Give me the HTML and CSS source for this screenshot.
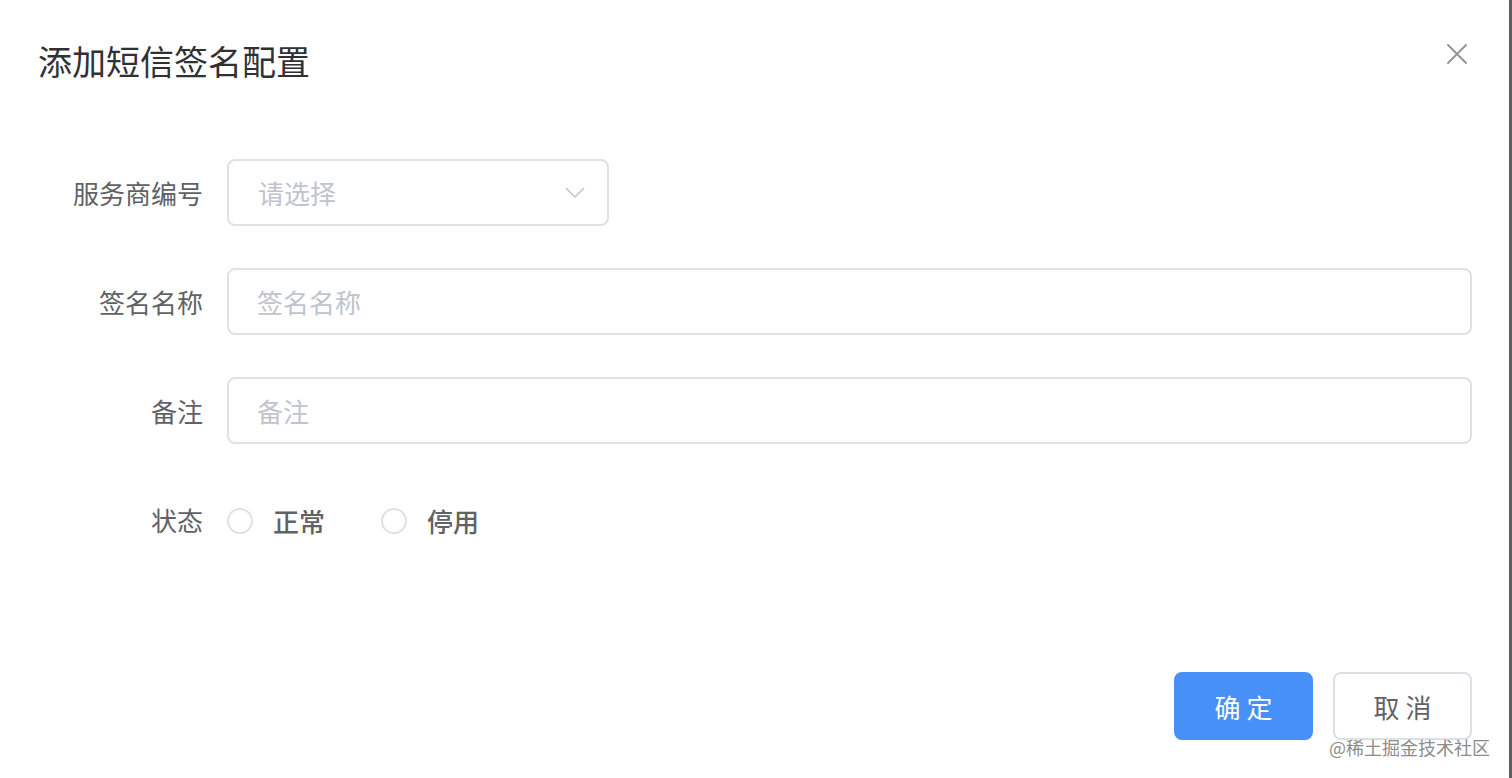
FILE: index.html
```html
<!DOCTYPE html>
<html lang="zh-CN">
<head>
<meta charset="utf-8">
<title>添加短信签名配置</title>
<link rel="stylesheet" href="styles.css">
</head>
<body>
<div class="page">
  <div class="dialog">
    <div class="header">
      <span class="title">添加短信签名配置</span>
      <button class="close" type="button" aria-label="关闭">
        <svg viewBox="0 0 20 20" width="20" height="20"><path d="M1 1 L19 19 M19 1 L1 19" stroke="#909399" stroke-width="1.9" fill="none" stroke-linecap="round"/></svg>
      </button>
    </div>
    <div class="body">
      <form class="form">
        <div class="item">
          <label class="label">服务商编号</label>
          <div class="control">
            <div class="select">
              <span class="ph">请选择</span>
              <svg class="arrow" viewBox="0 0 20 12" width="20" height="12"><path d="M1.5 1.5 L10 10 L18.5 1.5" stroke="#c0c4cc" stroke-width="1.6" fill="none" stroke-linecap="round" stroke-linejoin="round"/></svg>
            </div>
          </div>
        </div>
        <div class="item">
          <label class="label">签名名称</label>
          <div class="control wide"><input class="input" type="text" placeholder="签名名称"></div>
        </div>
        <div class="item">
          <label class="label">备注</label>
          <div class="control wide"><input class="input" type="text" placeholder="备注"></div>
        </div>
        <div class="item">
          <label class="label">状态</label>
          <div class="control radios">
            <label class="radio"><span class="dot"></span><span class="rtext">正常</span></label>
            <label class="radio"><span class="dot"></span><span class="rtext">停用</span></label>
          </div>
        </div>
      </form>
    </div>
    <div class="footer">
      <button class="btn primary" type="button">确 定</button>
      <button class="btn" type="button">取 消</button>
    </div>
    <span class="watermark">@稀土掘金技术社区</span>
  </div>
  <div class="edge"></div>
</div>
</body>
</html>
```

FILE: styles.css
```css
* { box-sizing: border-box; }
html, body {
  margin: 0;
  padding: 0;
  background: #ffffff;
}
body {
  font-family: "Noto Sans CJK SC", "Noto Sans", "Liberation Sans", sans-serif;
  color: #606266;
}
.page {
  display: flex;
  width: 1512px;
  height: 778px;
  overflow: hidden;
}
.dialog {
  position: relative;
  flex: 1;
  display: flex;
  flex-direction: column;
  background: #ffffff;
}
.edge {
  width: 3px;
  background: #5e5e5e;
}
.header {
  position: relative;
  padding: 38px 37px 19px 38px;
}
.title {
  display: block;
  font-size: 34px;
  line-height: 45px;
  color: #303133;
}
.close {
  position: absolute;
  top: 44px;
  right: 42px;
  width: 20px;
  height: 20px;
  padding: 0;
  border: 0;
  background: transparent;
  display: flex;
}
.body {
  padding: 57px 37px 0 38px;
  flex: 1;
}
.form {
  display: flex;
  flex-direction: column;
  gap: 42px;
}
.item {
  display: flex;
  align-items: center;
  height: 67px;
}
.label {
  width: 189px;
  flex: none;
  text-align: right;
  padding-right: 24px;
  font-size: 26px;
  line-height: 67px;
  color: #606266;
}
.control {
  flex: 1;
  display: flex;
  align-items: center;
  height: 67px;
}
.select {
  width: 382px;
  height: 67px;
  border: 2px solid #dfe1e6;
  border-radius: 8px;
  display: flex;
  align-items: center;
  justify-content: space-between;
  padding: 0 22px 0 29px;
}
.ph {
  font-size: 26px;
  color: #c0c4cc;
}
.arrow { display: block; }
.input {
  width: 100%;
  height: 67px;
  border: 2px solid #dfe1e6;
  border-radius: 8px;
  padding: 0 28px;
  font-family: inherit;
  font-size: 26px;
  color: #606266;
  outline: none;
  background: #ffffff;
}
.input::placeholder { color: #c0c4cc; }
.radios { gap: 56px; }
.radio {
  display: flex;
  align-items: center;
  gap: 20px;
  padding-top: 2px;
}
.dot {
  width: 26px;
  height: 26px;
  border: 2px solid #dfe1e6;
  border-radius: 50%;
  background: #ffffff;
}
.rtext {
  font-size: 26px;
  font-weight: 500;
  color: #606266;
}
.footer {
  display: flex;
  justify-content: flex-end;
  gap: 20px;
  padding: 0 37px 38px 0;
}
.btn {
  width: 139px;
  height: 68px;
  border: 2px solid #dcdfe6;
  border-radius: 8px;
  background: #ffffff;
  font-family: inherit;
  font-size: 26px;
  color: #606266;
  padding: 0;
}
.btn.primary {
  background: #4690f7;
  border-color: #4690f7;
  color: #ffffff;
}
.watermark {
  position: absolute;
  right: 19px;
  bottom: 20px;
  font-size: 18px;
  line-height: 22px;
  color: #8c8c8c;
  text-shadow: 0 0 2px #ffffff, 0 0 2px #ffffff;
}
```
